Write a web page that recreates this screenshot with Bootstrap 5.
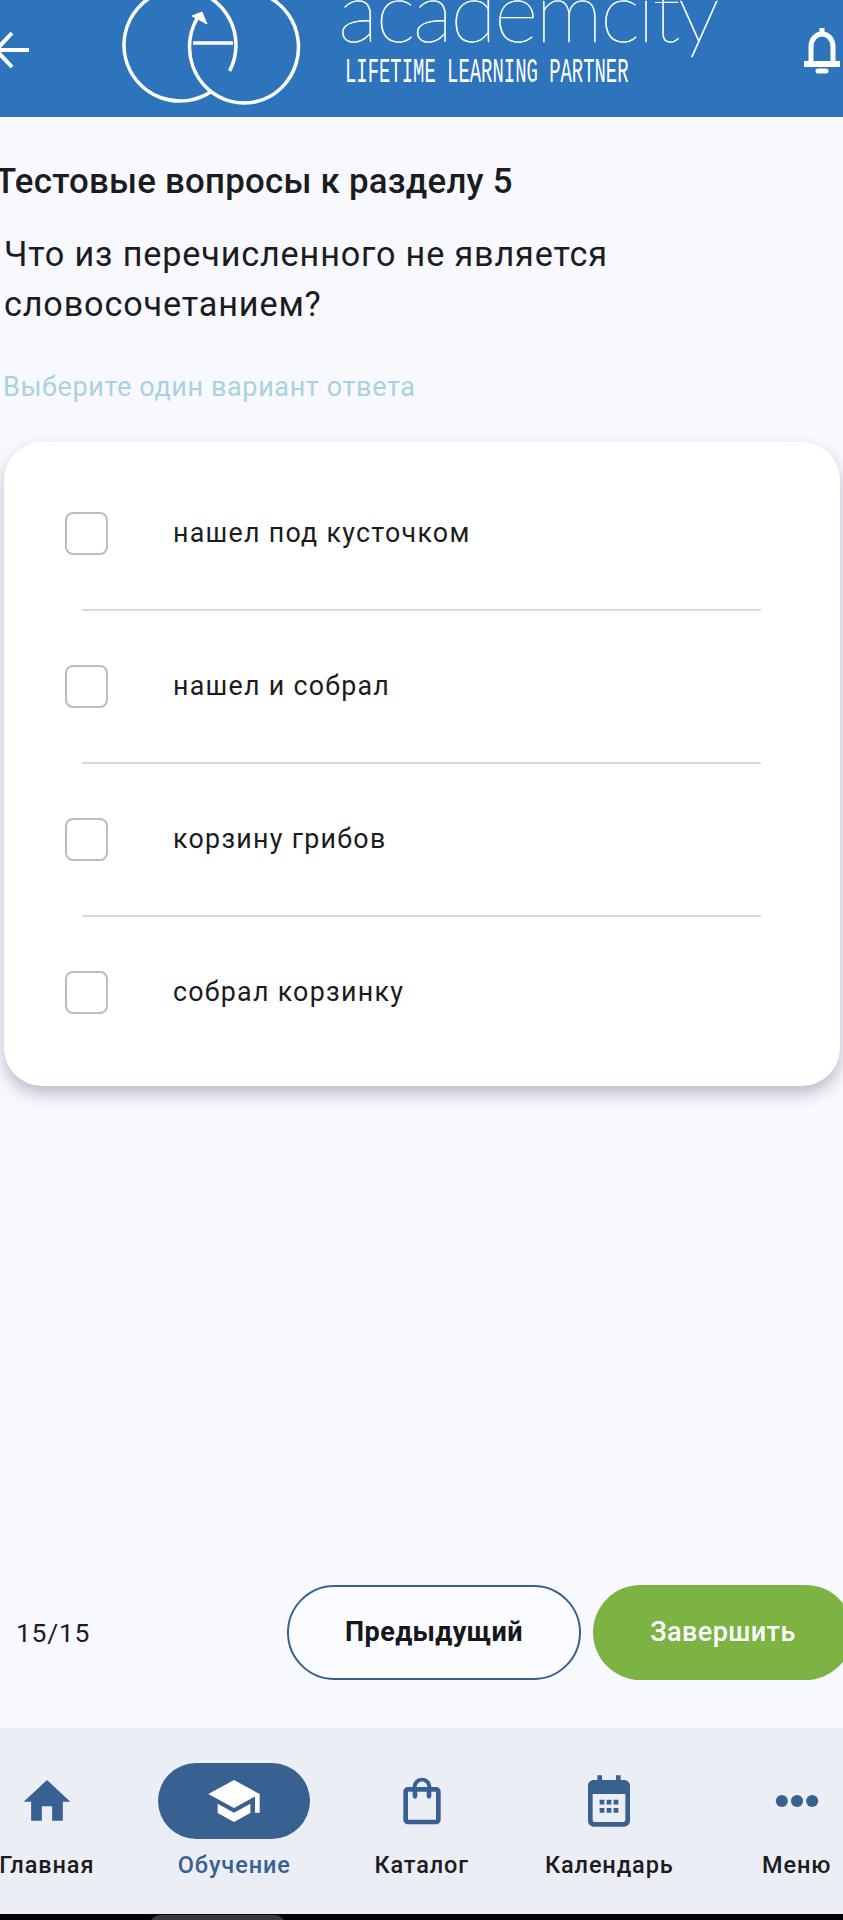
<!DOCTYPE html>
<html lang="ru">

<head>
    <meta charset="UTF-8">
    <meta name="viewport" content="width=device-width, initial-scale=1.0">
    <title>Тестовые вопросы</title>
    <link href="https://cdn.jsdelivr.net/npm/bootstrap@5.3.0/dist/css/bootstrap.min.css" rel="stylesheet">
    <style>
        html, body { height: 1920px; overflow: hidden; }
        body { background: #f8f9ff; font-family: Roboto, sans-serif; color: #1b1c20; width: 843px; }

        /* шапка */
        .app-header { height: 117px; background: #2d74bd; overflow: hidden; color: #fff; }
        .back-icon { width: 32px; height: 40px; margin-top: 30px; margin-left: -1px; flex: none; }
        .logo-icon { width: 184px; height: 117px; margin-left: 91px; flex: none; }
        .logo-text { margin-left: 34px; width: 400px; flex: none; }
        .logo-name { font-family: Lato, sans-serif; font-weight: 100; font-size: 85px; line-height: 78px; margin-top: -30px; margin-left: -2px; letter-spacing: -2.5px; white-space: nowrap; -webkit-text-stroke: .5px #fff; }
        .logo-sub { font-family: "Liberation Mono", monospace; font-size: 35px; line-height: 30px; margin-top: 10px; margin-left: 5px; white-space: nowrap; transform: scaleX(.54); transform-origin: left center; }
        .bell-icon { width: 36px; height: 50px; margin-top: 27px; margin-left: auto; margin-right: 3px; flex: none; }

        /* вопрос */
        .test-title { font-size: 34.8px; font-weight: 500; line-height: 40px; margin: 44px 0 0 -5px; letter-spacing: .25px; white-space: nowrap; }
        .test-question { font-size: 34.2px; line-height: 50px; margin: 28px 0 0 4px; letter-spacing: .85px; }
        .test-hint { font-size: 27px; line-height: 32px; color: #a9d1e2; margin: 42px 0 0 3px; letter-spacing: .62px; }

        /* варианты */
        .answers-box { background: #fff; border: 0; border-radius: 38px; margin: 39px 3px 0 4px; height: 644px; box-shadow: 0 8px 16px rgba(60, 64, 80, .32); padding-top: 16px; }
        .answer-row { height: 151px; padding-left: 61px; }
        .answer-check { width: 43px; height: 43px; border: 2.5px solid #bdbdbd; border-radius: 8px; flex: none; }
        .answer-text { font-size: 26.8px; margin-left: 65px; letter-spacing: 1.28px; }
        .answer-line { height: 2px; background: #d9d9d9; margin: 0 79px 0 78px; }

        /* кнопки */
        .pager-row { height: 95px; margin-top: 499px; }
        .pager-count { font-size: 26.5px; margin-left: 16px; letter-spacing: .7px; }
        .btn-prev, .btn-finish { height: 95px; border-radius: 48px; font-size: 27px; font-weight: 700; line-height: 1; letter-spacing: .4px; }
        .btn-prev { width: 294px; margin-left: auto; background: #fbfcff; border: 2px solid #38618f; color: #16171b; }
        .btn-finish { width: 260px; margin: 0 -10px 0 12px; background: #7cb342; border: 0; color: #fff; font-weight: 500; }

        /* нижнее меню */
        .bottom-nav { height: 186px; margin-top: 48px; background: #eceef5; padding-top: 35px; }
        .bottom-list { margin-left: -47px; width: 938px; }
        .nav-cell { width: 187.5px; }
        .nav-pill { width: 152px; height: 76px; border-radius: 38px; }
        .nav-pill.active-pill { background: #386192; }
        .nav-pill svg { width: 56px; height: 56px; fill: #386192; }
        .nav-pill.active-pill svg { fill: #fff; }
        .nav-label { font-size: 23.5px; font-weight: 500; line-height: 30px; margin-top: 11px; letter-spacing: .9px; white-space: nowrap; }
        .nav-label.active-label { color: #386192; }
        .phone-bar { height: 6px; background: #000; overflow: hidden; }
        .phone-handle { width: 135px; height: 20px; margin: 1px 0 0 150px; border-radius: 10px; background: #3a3a3c; }
    </style>
</head>

<body>
    <header class="app-header d-flex">
        <svg class="back-icon" viewBox="0 0 32 40" fill="none" stroke="#fff" stroke-width="4">
            <path d="M0 20h30M13 3 -3 20l16 17"/>
        </svg>
        <svg class="logo-icon" viewBox="0 0 184 117" fill="none" stroke="#fff" stroke-width="3.500">
            <path d="M107.600 71A56 56 0 1 0 90 91"/>
            <path d="M78 14A54.500 56 0 1 0 94 -1"/>
            <path d="M71 43h40"/>
            <path d="M70 16 80 12 85 24z" fill="#fff" stroke-width="1"/>
        </svg>
        <div class="logo-text">
            <div class="logo-name">academcity</div>
            <div class="logo-sub">LIFETIME LEARNING PARTNER</div>
        </div>
        <svg class="bell-icon" viewBox="0 0 36 50" fill="none" stroke="#fff" stroke-width="5">
            <path d="M7 36V20C7 12 12 7 18 7s11 5 11 13v16"/>
            <path d="M1 37h34" stroke-width="6" stroke-linecap="round"/>
            <path d="M18 1v5" stroke-width="5"/>
            <path d="M14 44h8" stroke-width="5" stroke-linecap="round"/>
        </svg>
    </header>

    <main>
        <div class="test-title">Тестовые вопросы к разделу 5</div>
        <div class="test-question">Что из перечисленного не является<br>словосочетанием?</div>
        <div class="test-hint">Выберите один вариант ответа</div>

        <div class="card answers-box">
            <div class="answer-row d-flex align-items-center">
                <span class="answer-check"></span><span class="answer-text">нашел под кусточком</span>
            </div>
            <div class="answer-line"></div>
            <div class="answer-row d-flex align-items-center">
                <span class="answer-check"></span><span class="answer-text">нашел и собрал</span>
            </div>
            <div class="answer-line"></div>
            <div class="answer-row d-flex align-items-center">
                <span class="answer-check"></span><span class="answer-text">корзину грибов</span>
            </div>
            <div class="answer-line"></div>
            <div class="answer-row d-flex align-items-center">
                <span class="answer-check"></span><span class="answer-text">собрал корзинку</span>
            </div>
        </div>

        <div class="pager-row d-flex align-items-center">
            <span class="pager-count">15/15</span>
            <button type="button" class="btn btn-prev">Предыдущий</button>
            <button type="button" class="btn btn-finish">Завершить</button>
        </div>
    </main>

    <nav class="bottom-nav">
        <div class="bottom-list d-flex">
            <div class="nav-cell d-flex flex-column align-items-center">
                <div class="nav-pill d-flex align-items-center justify-content-center">
                    <svg viewBox="0 0 24 24"><path d="M9.800 20.500v-6.300h4.400v6.300h4.600v-8.200H22L12 3 2 12.300h3.200v8.200z"/></svg>
                </div>
                <div class="nav-label">Главная</div>
            </div>
            <div class="nav-cell d-flex flex-column align-items-center">
                <div class="nav-pill active-pill d-flex align-items-center justify-content-center">
                    <svg viewBox="0 0 24 24"><path d="M5 13.180v4L12 21l7-3.820v-4L12 17l-7-3.820zM12 3 1 9l11 6 9-4.910V17h2V9L12 3z"/></svg>
                </div>
                <div class="nav-label active-label">Обучение</div>
            </div>
            <div class="nav-cell d-flex flex-column align-items-center">
                <div class="nav-pill d-flex align-items-center justify-content-center">
                    <svg viewBox="0 0 24 24"><path d="M18 6h-2c0-2.200-1.800-4-4-4S8 3.800 8 6H6c-1.100 0-2 .9-2 2v12c0 1.100.9 2 2 2h12c1.100 0 2-.9 2-2V8c0-1.100-.9-2-2-2zm-6-2.400c1.300 0 2.300 1.100 2.300 2.400H9.700c0-1.300 1-2.400 2.300-2.400zM18 20H6V8h2v2c0 .5.400 1 1 1s1-.5 1-1V8h4v2c0 .5.400 1 1 1s1-.5 1-1V8h2v12z"/></svg>
                </div>
                <div class="nav-label">Каталог</div>
            </div>
            <div class="nav-cell d-flex flex-column align-items-center">
                <div class="nav-pill d-flex align-items-center justify-content-center">
                    <svg viewBox="0 0 24 24"><path fill-rule="evenodd" d="M7 1h2v2h6V1h2v2h1.500C19.900 3 21 4.100 21 5.500v15c0 1.400-1.100 2.500-2.500 2.500h-13C4.100 23 3 21.900 3 20.500v-15C3 4.100 4.100 3 5.500 3H7V1zM5 9v11c0 .6.400 1 1 1h12c.6 0 1-.4 1-1V9H5zm3 2.500h2v2H8zm3 0h2v2h-2zm3 0h2v2h-2zm-6 3.500h2v2H8zm3 0h2v2h-2zm3 0h2v2h-2z"/></svg>
                </div>
                <div class="nav-label">Календарь</div>
            </div>
            <div class="nav-cell d-flex flex-column align-items-center">
                <div class="nav-pill d-flex align-items-center justify-content-center">
                    <svg viewBox="0 0 24 24"><circle cx="5.500" cy="12" r="2.600"/><circle cx="12" cy="12" r="2.600"/><circle cx="18.500" cy="12" r="2.600"/></svg>
                </div>
                <div class="nav-label">Меню</div>
            </div>
        </div>
    </nav>
    <div class="phone-bar"><div class="phone-handle"></div></div>

    <script src="https://cdn.jsdelivr.net/npm/bootstrap@5.3.0/dist/js/bootstrap.bundle.min.js"></script>
</body>

</html>
